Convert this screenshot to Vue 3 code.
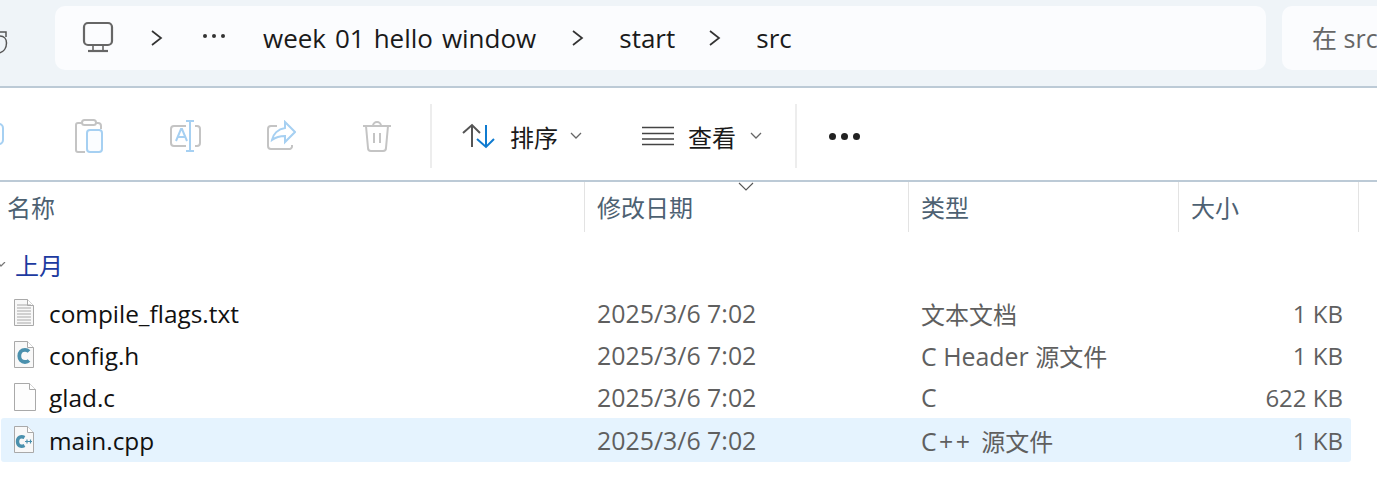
<template>
  <div class="explorer">
    <header class="topbar">
      <div class="refresh">
        <svg width="10" height="24" viewBox="0 0 10 24" fill="none" stroke="#555" stroke-width="1.5">
          <path d="M0 5c4 0 6.500 3 6.500 7 0 5-3 9-7.500 10" />
          <path d="M0 1h6v5" />
        </svg>
      </div>
      <nav class="address">
        <svg class="pc" width="32" height="32" viewBox="0 0 32 32" fill="none" stroke="#666" stroke-width="2.2">
          <rect x="2" y="2" width="28" height="22" rx="4" />
          <path d="M11 24v5M21 24v5" stroke-width="1.6" />
          <path d="M6 30h20" />
        </svg>
        <svg class="sep first" width="13" height="18" viewBox="0 0 13 18" fill="none" stroke="#333" stroke-width="1.7"><path d="M2 2l9 7-9 7" /></svg>
        <span class="crumb-dots"><i></i><i></i><i></i></span>
        <span class="crumb">week 01 hello window</span>
        <svg class="sep" width="13" height="18" viewBox="0 0 13 18" fill="none" stroke="#333" stroke-width="1.7"><path d="M2 2l9 7-9 7" /></svg>
        <span class="crumb">start</span>
        <svg class="sep last" width="13" height="18" viewBox="0 0 13 18" fill="none" stroke="#333" stroke-width="1.7"><path d="M2 2l9 7-9 7" /></svg>
        <span class="crumb">src</span>
      </nav>
      <div class="search">在 src 中搜索</div>
    </header>

    <section class="toolbar">
      <div class="actions">
        <svg class="cut" width="10" height="24" viewBox="0 0 10 24" fill="none" stroke="#a6d0f2" stroke-width="2"><path d="M-6 2h5a4 4 0 0 1 4 4v12a4 4 0 0 1-4 4h-5" /></svg>
        <svg class="act paste" width="30" height="34" viewBox="0 0 30 34" fill="none" stroke-width="2">
          <path d="M8 4H4a2 2 0 0 0-2 2v25a2 2 0 0 0 2 2h7M22 4h2a3 3 0 0 1 3 3v3" stroke="#c4c4c4" />
          <rect x="8" y="1" width="14" height="5" rx="2.5" stroke="#c4c4c4" />
          <rect x="13" y="11" width="15" height="22" rx="3" fill="#fbfdff" stroke="#a6d0f2" />
        </svg>
        <svg class="act rename" width="32" height="32" viewBox="0 0 32 32" fill="none" stroke-width="2">
          <path d="M17 6H5a3 3 0 0 0-3 3v14a3 3 0 0 0 3 3h12M26 6h2a3 3 0 0 1 3 3v14a3 3 0 0 1-3 3h-2" stroke="#c4c4c4" />
          <path d="M7 21l5-12h1l5 12M9 17h7" stroke="#a6d0f2" />
          <path d="M21 1v30M17 1h8M17 31h8" stroke="#a6d0f2" />
        </svg>
        <svg class="act share" width="30" height="32" viewBox="0 0 30 32" fill="none" stroke-width="2">
          <path d="M11 6H5a3 3 0 0 0-3 3v17a3 3 0 0 0 3 3h19a3 3 0 0 0 2-2v-2" stroke="#c4c4c4" />
          <path d="M19 2l10 10-10 10v-6c-5 0-9 1-13 4 1-6 6-11 13-12z" stroke="#a6d0f2" />
        </svg>
        <svg class="act trash" width="30" height="32" viewBox="0 0 30 32" fill="none" stroke="#c4c4c4" stroke-width="2">
          <path d="M1 6h28M11 6a4 4 0 0 1 8 0" />
          <path d="M4 6l2 22a3 3 0 0 0 3 3h12a3 3 0 0 0 3-3l2-22" />
          <path d="M12 13v10M18 13v10" />
        </svg>
      </div>
      <div class="divider"></div>
      <div class="tool sort">
        <svg width="34" height="26" viewBox="0 0 34 26" fill="none" stroke-width="2">
          <path d="M10 24V2M1 10l9-8 8 8" stroke="#555" />
          <path d="M24 2v22M15 16l9 8 8-8" stroke="#0f7bd0" />
        </svg>
        <span>排序</span>
        <svg class="caret" width="12" height="8" viewBox="0 0 12 8" fill="none" stroke="#666" stroke-width="1.3"><path d="M1 1l5 5 5-5" /></svg>
      </div>
      <div class="tool view">
        <svg width="32" height="20" viewBox="0 0 32 20" fill="none" stroke="#444" stroke-width="1.6">
          <path d="M0 1.500h32M0 7.500h32M0 13h32M0 18.500h32" />
        </svg>
        <span>查看</span>
        <svg class="caret" width="12" height="8" viewBox="0 0 12 8" fill="none" stroke="#666" stroke-width="1.3"><path d="M1 1l5 5 5-5" /></svg>
      </div>
      <div class="divider"></div>
      <div class="more"><i></i><i></i><i></i></div>
    </section>

    <section class="heads">
      <div class="head">名称</div>
      <div class="head">修改日期
        <svg class="sort-mark" width="16" height="9" viewBox="0 0 16 9" fill="none" stroke="#555" stroke-width="1.1"><path d="M1 1l7 7 7-7" /></svg>
      </div>
      <div class="head">类型</div>
      <div class="head">大小</div>
    </section>

    <div class="group">
      <svg width="8" height="6" viewBox="0 0 8 6" fill="none" stroke="#777" stroke-width="1.2"><path d="M-2 0l3 4 4-4" /></svg>
      <span>上月</span>
    </div>

    <div v-for="f in files" :key="f.name" class="row" :class="{ selected: f.selected }">
      <div class="name">
        <svg width="24" height="30" viewBox="0 0 24 30" class="file-icon">
          <path :d="f.kind === 'blank' ? 'M1.500 1.500h15l6 6v21h-21z' : 'M1.500 1.500h13l6 6v20h-19z'" :fill="f.kind === 'blank' ? '#fdfdfd' : '#f8f8f8'" stroke="#a9a9a9" />
          <path :d="f.kind === 'blank' ? 'M16.500 1.500v6h6' : 'M14.500 1.500v6h6'" fill="#fff" stroke="#a9a9a9" />
          <g v-if="f.kind === 'text'" stroke="#a8a8a8" stroke-width="1">
            <path v-for="y in lines" :key="y" :d="`M4 ${y}h14`" />
          </g>
          <path v-if="f.kind === 'c'" d="M16 11.500c-1-1-2.400-1.700-4-1.700-3.500 0-5.700 2.800-5.700 6.200 0 3.400 2.200 6 5.700 6 1.600 0 3-.5 4-1.500" fill="none" stroke="#4a90ad" stroke-width="3.800" />
          <g v-if="f.kind === 'cpp'" fill="none" stroke="#4a90ad">
            <path d="M11.500 12.500c-3.700-2-7 0-7 4s3.300 6 7 4" stroke-width="3.400" />
            <path d="M12 16.500h7M14 14.500v4M17.500 14.500v4" stroke-width="1.200" />
          </g>
        </svg>
        <span>{{ f.name }}</span>
      </div>
      <div class="cell">2025/3/6 7:02</div>
      <div class="cell"><span class="latin">{{ f.typeLatin }}</span><span class="cjk">{{ f.typeCjk }}</span></div>
      <div class="cell size">{{ f.size }}</div>
    </div>
  </div>
</template>

<script setup>
const lines = [7, 10, 13, 16, 19, 22, 25]

const files = [
  { name: 'compile_flags.txt', typeLatin: '', typeCjk: '文本文档', size: '1 KB', kind: 'text' },
  { name: 'config.h', typeLatin: 'C Header ', typeCjk: '源文件', size: '1 KB', kind: 'c' },
  { name: 'glad.c', typeLatin: 'C', typeCjk: '', size: '622 KB', kind: 'blank' },
  { name: 'main.cpp', typeLatin: 'C++ ', typeCjk: '源文件', size: '1 KB', kind: 'cpp', selected: true },
]
</script>

<style>
html,
body {
  margin: 0;
  background: #fff;
  overflow: hidden;
}
</style>

<style scoped>
.explorer {
  width: 1377px;
  height: 485px;
  overflow: hidden;
  background: #fff;
  font-family: "Open Sans", "Noto Sans CJK SC", sans-serif;
  font-size: 24px;
  color: #1a1a1a;
}

.topbar {
  height: 88px;
  box-sizing: border-box;
  padding: 6px 0 16px 0;
  display: flex;
  background: #eff4f8;
  border-bottom: 2px solid #bccad6;
}

.refresh {
  width: 55px;
  flex: none;
  padding-top: 25px;
  box-sizing: border-box;
  line-height: 0;
}

.address {
  width: 1211px;
  flex: none;
  height: 64px;
  box-sizing: border-box;
  padding-left: 27px;
  display: flex;
  align-items: center;
  background: #fbfcfe;
  border-radius: 10px;
}

.pc {
  flex: none;
  margin-top: -2px;
}

.sep {
  flex: none;
  margin: 0 35px 0 35px;
}

.sep.first {
  margin: 0 40px 0 36px;
}

.sep.last {
  margin: 0 35px 0 33px;
}

.crumb-dots {
  width: 23px;
  margin-right: 37px;
  display: flex;
  gap: 5px;
  margin-top: -4px;
}

.crumb-dots i {
  width: 4px;
  height: 4px;
  flex: none;
  border-radius: 50%;
  background: #333;
}

.crumb {
  white-space: nowrap;
  font-size: 26px;
  word-spacing: 2.2px;
}

.search {
  margin-left: 16px;
  flex: none;
  width: 120px;
  height: 64px;
  box-sizing: border-box;
  padding-left: 30px;
  line-height: 64px;
  font-size: 25px;
  color: #666;
  white-space: nowrap;
  overflow: hidden;
  background: #fbfcfe;
  border-radius: 10px 0 0 10px;
}

.toolbar {
  height: 94px;
  box-sizing: border-box;
  border-bottom: 2px solid #bccad6;
  display: flex;
  align-items: center;
  padding-top: 4px;
}

.actions {
  width: 430px;
  flex: none;
  position: relative;
  height: 32px;
}

.act {
  position: absolute;
  top: 0;
}

.cut {
  position: absolute;
  left: 0;
  top: 2px;
}

.paste { left: 74px; top: -1px; }
.rename { left: 169px; }
.share { left: 266px; }
.trash { left: 362px; }

.divider {
  width: 2px;
  height: 64px;
  background: #ededed;
  flex: none;
}

.tool {
  display: flex;
  align-items: center;
  flex: none;
}

.sort {
  margin-left: 30px;
}

.sort span {
  margin-left: 14px;
}

.view {
  margin-left: 60px;
  margin-right: 33px;
}

.view span {
  margin-left: 14px;
}

.caret {
  margin-left: 12px;
}

.view .caret {
  margin-left: 14px;
}

.more {
  margin-left: 32px;
  display: flex;
  gap: 5px;
}

.more i {
  width: 7px;
  height: 7px;
  border-radius: 50%;
  background: #222;
}

.heads {
  height: 52px;
  display: grid;
  grid-template-columns: 585px 324px 270px 180px;
}

.head {
  box-sizing: border-box;
  padding: 8px 0 0 11px;
  height: 50px;
  border-right: 1px solid #e3e3e3;
  color: #4d6172;
  position: relative;
  line-height: 36px;
  border-left: 1px solid transparent;
}

.head:first-child {
  padding-left: 7px;
  border-left: 0;
}

.sort-mark {
  position: absolute;
  left: 152px;
  top: 0;
}

.group {
  height: 58px;
  display: flex;
  align-items: center;
  box-sizing: border-box;
  padding-top: 3px;
  color: #1c3aa0;
}

.group svg {
  margin-right: 7px;
  flex: none;
}

.row {
  height: 42px;
  width: 1359px;
  display: grid;
  grid-template-columns: 585px 324px 270px 180px;
  align-items: center;
  color: #5f5f5f;
  white-space: nowrap;
}

.row.selected {
  height: 44px;
  margin-left: 1px;
  width: 1350px;
  grid-template-columns: 584px 324px 270px 172px;
  background: #e5f3fe;
  border-radius: 3px;
}

.name {
  display: flex;
  align-items: center;
  padding-left: 13px;
  color: #111;
  font-size: 24.4px;
}

.row.selected .name {
  padding-left: 12px;
}

.file-icon {
  flex: none;
  margin-right: 12px;
}

.cell {
  padding-left: 12px;
  font-size: 24.9px;
}

.cjk {
  font-size: 24px;
}

.row.selected .latin {
  letter-spacing: 2.4px;
}

.size {
  text-align: right;
  padding: 0 16px 0 0;
  font-size: 24px;
}

.row.selected .size {
  padding-right: 8px;
}
</style>
